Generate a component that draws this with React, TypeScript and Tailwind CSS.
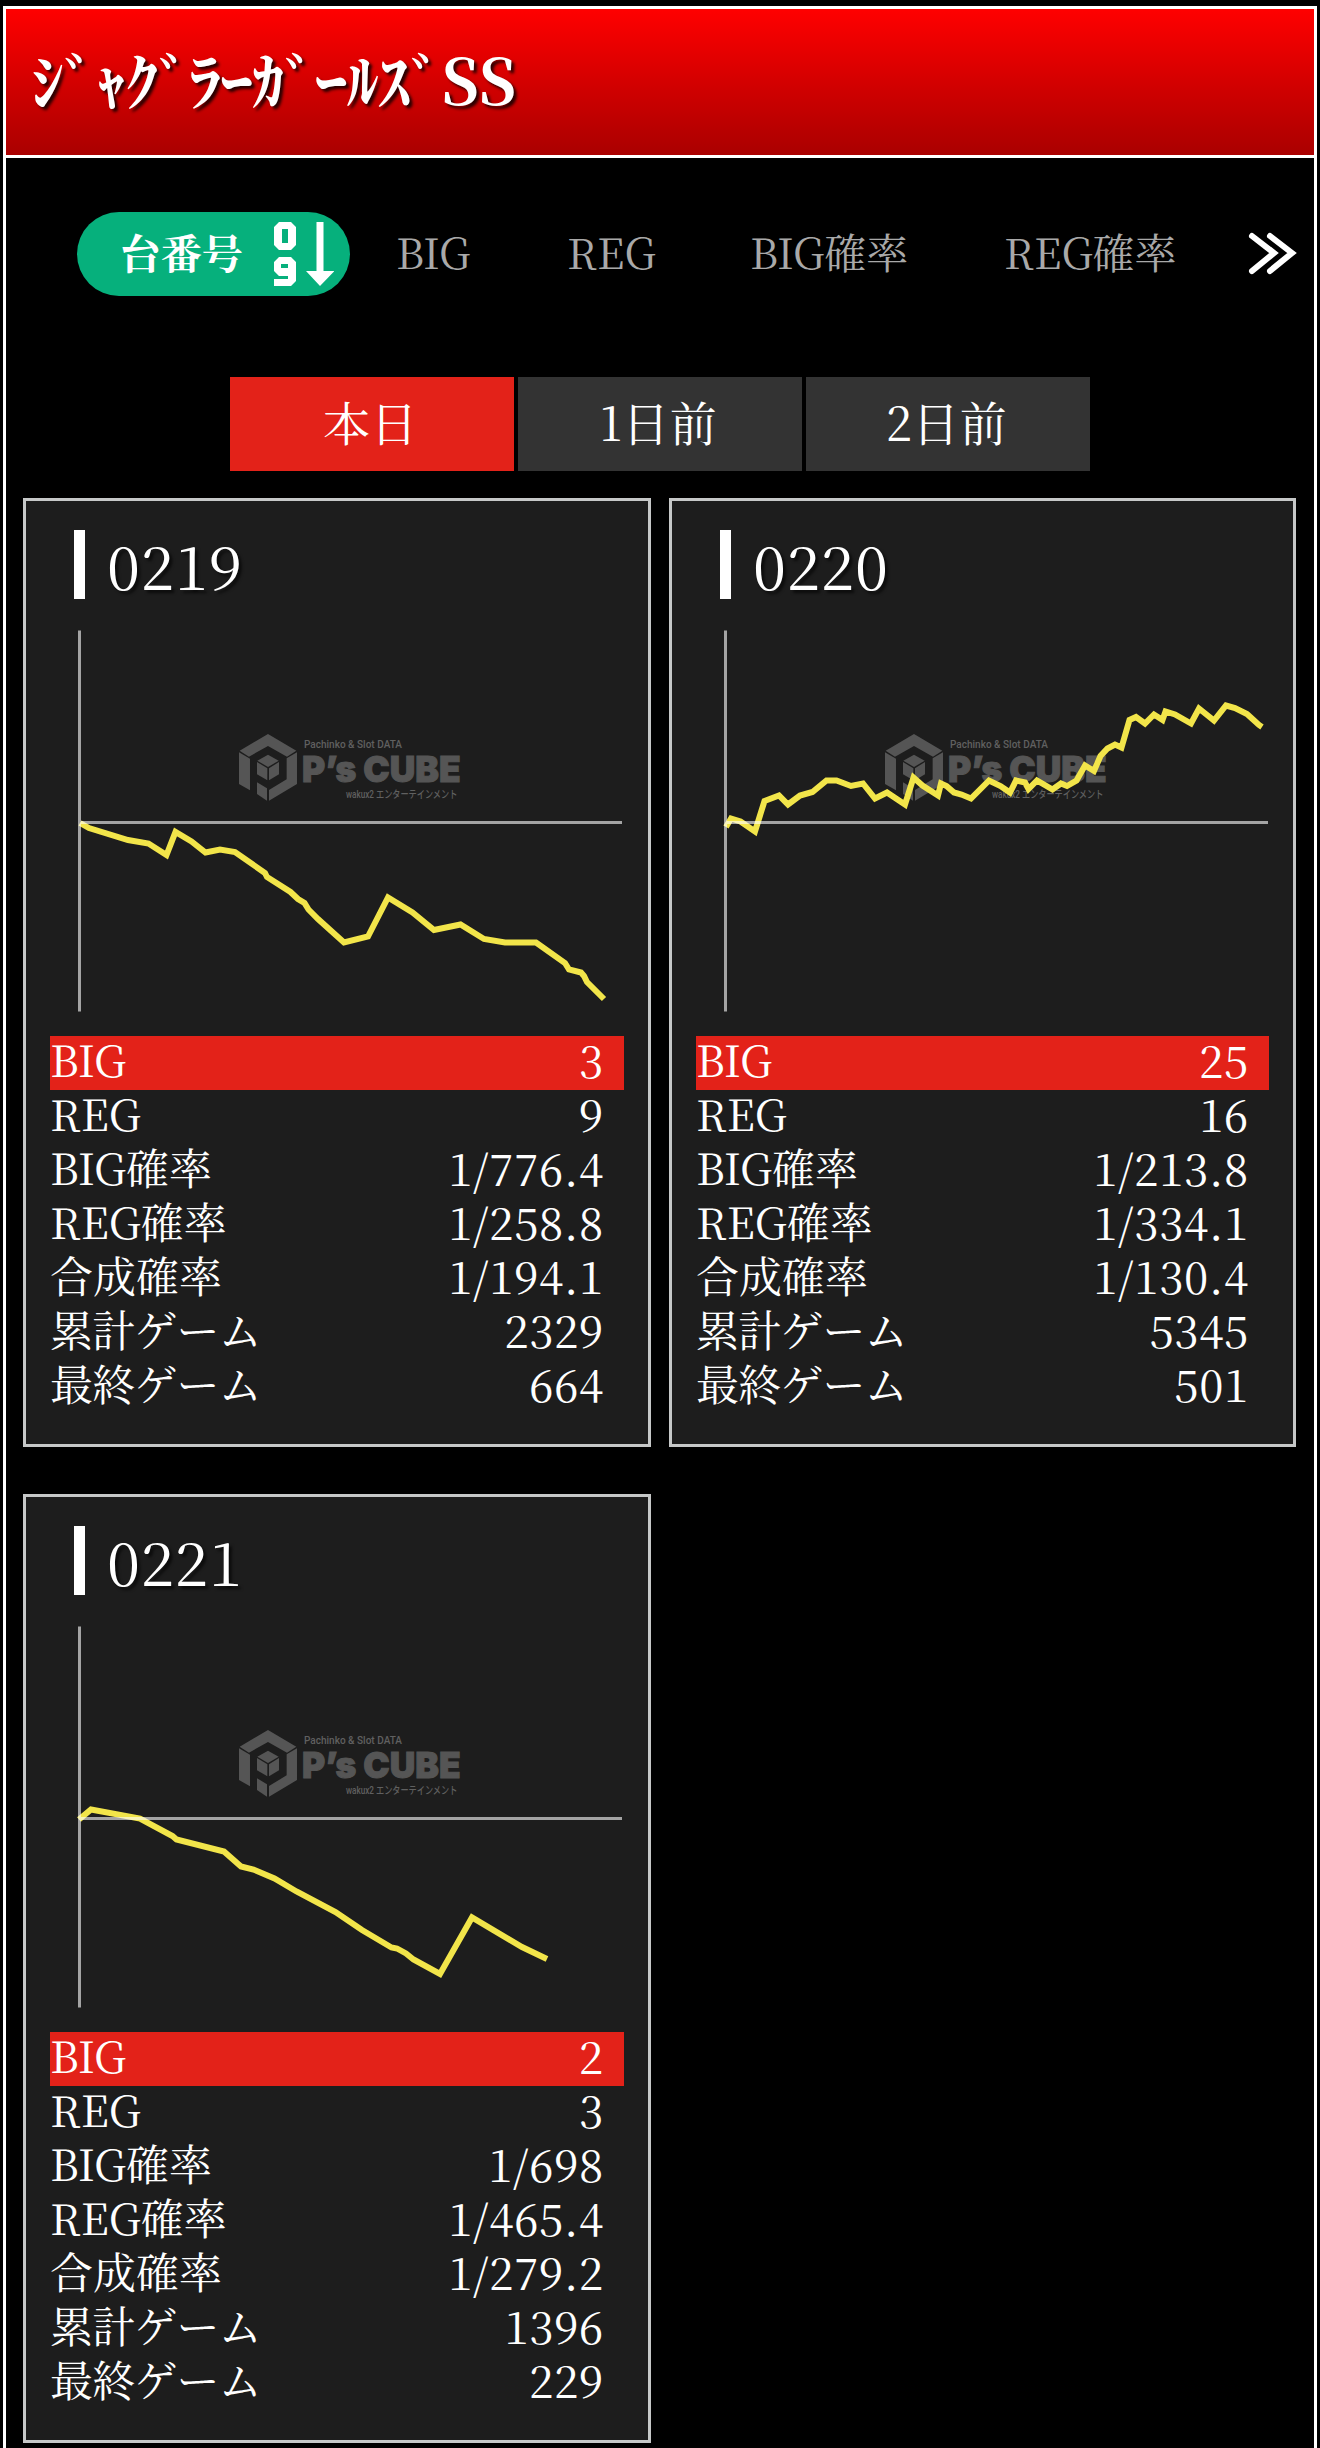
import clsx from "clsx";
import * as React from "react";

interface Machine {
  readonly id: string;
  readonly stats: ReadonlyArray<string>;
  readonly points: string;
}

const STAT_LABELS = [
  "BIG",
  "REG",
  "BIG確率",
  "REG確率",
  "合成確率",
  "累計ゲーム",
  "最終ゲーム",
] as const;

const DAYS = ["本日", "1日前", "2日前"] as const;

const MACHINES: ReadonlyArray<Machine> = [
  {
    id: "0219",
    stats: ["3", "9", "1/776.4", "1/258.8", "1/194.1", "2329", "664"],
    points:
      "2,193 11,198 50,210 70.5,213.5 88.5,225 97.5,202 113.5,211.5 127.5,222.5 142,219.5 157,222 187,243 189,247 212.5,262 220,269 226.5,273 230.5,279.5 240,289 266,312.5 290,306.5 310,267.5 334.5,282.5 356,300 382.5,294.5 406,309 427,312.5 458,312.5 487,333 491,339.5 503,342.5 506,346 509,352 526,369",
  },
  {
    id: "0220",
    stats: ["25", "16", "1/213.8", "1/334.1", "1/130.4", "5345", "501"],
    points:
      "2,197 7,188.5 16.5,191.5 31,201.5 40.5,171 55,165.5 64,174.5 76,165.5 88.5,162 102.5,150.5 112.5,150.5 127,156 139,153.5 151,168.5 163,162.5 181,174.5 189.5,147.5 198.5,155.5 214,165.5 217,153.5 222.5,156 230,162.5 237.5,164.5 247,168.5 265,150.5 276.5,156 286,162.5 292,150.5 301,152.5 304.5,159 313,150.5 328.5,159.5 337,153.5 343,156 352.5,150.5 361,135.5 370,141 376.5,126 383.5,118.5 391,114.5 397.5,117.5 405.5,90 412,87 421,93.5 430,84.5 438.5,90 441.5,81.5 451,84.5 467,93.5 475,78.5 490,90.5 502,75.5 511,78 523,84 535,95 538,97",
  },
  {
    id: "0221",
    stats: ["2", "3", "1/698", "1/465.4", "1/279.2", "1396", "229"],
    points:
      "1,193.5 13,183.5 62,192.5 94.5,210 98.5,213.5 146,225.5 163,240.5 175.5,243.5 196.5,252.5 218.5,265.5 257.5,286 284,304 313.5,321.5 319,322.5 328,327.5 335.5,333.5 362,348 394,291.5 444,321 469,333",
  },
];

function SortIcon() {
  return (
    <svg width="60" height="64" viewBox="0 0 60 64" className="shrink-0">
      <path
        d="M5 0h12l5 5v18l-5 5H5l-5-5V5zM8 7v14h6V7zM5 35h12l5 5v19l-5 5H0v-7h14v-3H5l-5-5v-9zM7 42v4h7v-4z"
        fill="#fff"
        fillRule="evenodd"
      />
      <path d="M42.500 0h7v49h11L46 64 32 49h10.500z" fill="#fff" />
    </svg>
  );
}

function Logo() {
  return (
    <g transform="translate(142 90) scale(0.3333)" fill="#555">
      <path d="M144 42l85 50-28 18-57-32-57 32-28-18z" />
      <path d="M57 97l33 19v95l-33-19z" />
      <path d="M231 97v95l-84 50v-32l53-32v-63z" />
      <path d="M111 187l30 18v37l-30-20z" />
      <path d="M144 104l32 18-32 19-32-19z" />
      <path d="M111 126l31 19v36l-31-18z" />
      <path d="M177 126l-30 19v36l30-18z" />
      <g fontFamily="Roboto, 'Noto Sans CJK JP', sans-serif" fontWeight="500" fill="#606060">
        <text x="252" y="84" fontSize="32" textLength="294" lengthAdjust="spacingAndGlyphs">
          Pachinko &amp; Slot DATA
        </text>
        <text x="378" y="234" fontSize="32" textLength="334" lengthAdjust="spacingAndGlyphs">
          wakux2 エンターテインメント
        </text>
      </g>
      <text
        x="246"
        y="186"
        fontSize="108"
        fontWeight="900"
        fontFamily="Inter, sans-serif"
        stroke="#555"
        strokeWidth="3"
        textLength="476"
        lengthAdjust="spacingAndGlyphs"
      >
        P’s CUBE
      </text>
    </g>
  );
}

const SlumpGraph = React.memo(function SlumpGraph({ points }: { readonly points: string }) {
  return (
    <svg width="545" height="382" viewBox="0 0 545 382" className="ml-[28px] mt-[31px] block overflow-visible">
      <Logo />
      <polyline points={points} fill="none" stroke="#f2e54a" strokeWidth="6" strokeMiterlimit="6" />
      <path d="M0 0.500h3v381h-3zM3 191h541v3H3z" fill="#fff" fillOpacity="0.6" />
    </svg>
  );
});

function MachineCard({ machine }: { readonly machine: Machine }) {
  return (
    <section className="h-[949px] border-3 border-[#c6c8c8] bg-[#1d1d1d] px-6 pt-[29px]">
      <h2 className="ml-6 flex h-[69px] border-l-[11px] border-white pl-[22px] text-[60px]/[68px] tracking-[1px] [text-shadow:3px_3px_3px_rgba(0,0,0,0.6)]">
        {machine.id}
      </h2>
      <SlumpGraph points={machine.points} />
      <dl className="mt-6">
        {STAT_LABELS.map((label, i) => (
          <div
            key={label}
            className={clsx("flex h-[54px] justify-between pr-[20px] text-[43px]/[46px]", i === 0 && "bg-[#e32219]")}
          >
            <dt className={clsx(i > 4 && "tracking-[-0.800px]")}>{label}</dt>
            <dd className="text-[44px]/[46px] tracking-[0.700px]">{machine.stats[i]}</dd>
          </div>
        ))}
      </dl>
    </section>
  );
}

export default function App() {
  return (
    <div className="h-[2448px] overflow-hidden bg-black px-[3px] pt-[6px] font-['Noto_Serif_CJK_JP','Liberation_Serif','Noto_Sans_CJK_JP',serif] text-white">
      <div className="h-full border-x-3 border-t-3 border-white">
        <header className="h-[149px] border-b-3 border-white bg-linear-to-b from-[#ff0000] to-[#aa0000] pl-[26px]">
          <h1 className="whitespace-nowrap pt-9 text-[63px]/[66px] font-bold [text-shadow:3px_3px_3px_rgba(0,0,0,0.8)]">
            ｼﾞｬｸﾞﾗｰｶﾞｰﾙｽﾞSS
          </h1>
        </header>

        <nav className="mt-[54px] flex h-[84px] items-center whitespace-nowrap pl-[71px] text-[42px]/[54px] text-[#a9a9a9]">
          <div className="flex h-[84px] w-[273px] items-center justify-between rounded-[42px] bg-[#06b07c] pl-[43px] pr-[16px] text-[41px] font-bold text-white">
            <span className="-mt-1">台番号</span>
            <SortIcon />
          </div>
          <div className="-mt-[6px] ml-[46px] flex gap-[98px]">
            <span className="w-[73px]">BIG</span>
            <span className="w-[85px]">REG</span>
            <span className="w-[156px]">BIG確率</span>
            <span className="w-[169px]">REG確率</span>
          </div>
          <svg width="49" height="44" viewBox="0 0 49 44" className="ml-[75px]">
            <path d="M4 4l22 17L4 39M22 4l22 17-22 18" fill="none" stroke="#fff" strokeWidth="6" strokeLinecap="round" />
          </svg>
        </nav>

        <div className="mt-[81px] flex justify-center gap-1">
          {DAYS.map((day, i) => (
            <button
              key={day}
              className={clsx(
                "flex h-[94px] w-[284px] justify-center pr-[3px] text-[47px]/[87px] tracking-[0.500px]",
                i === 0 ? "bg-[#e32219]" : "bg-[#333]",
              )}
            >
              {day}
            </button>
          ))}
        </div>

        <main className="mt-[27px] grid grid-cols-[628px_627px] gap-x-[18px] gap-y-[47px] pl-[17px]">
          {MACHINES.map((machine) => <MachineCard key={machine.id} machine={machine} />)}
        </main>
      </div>
    </div>
  );
}
